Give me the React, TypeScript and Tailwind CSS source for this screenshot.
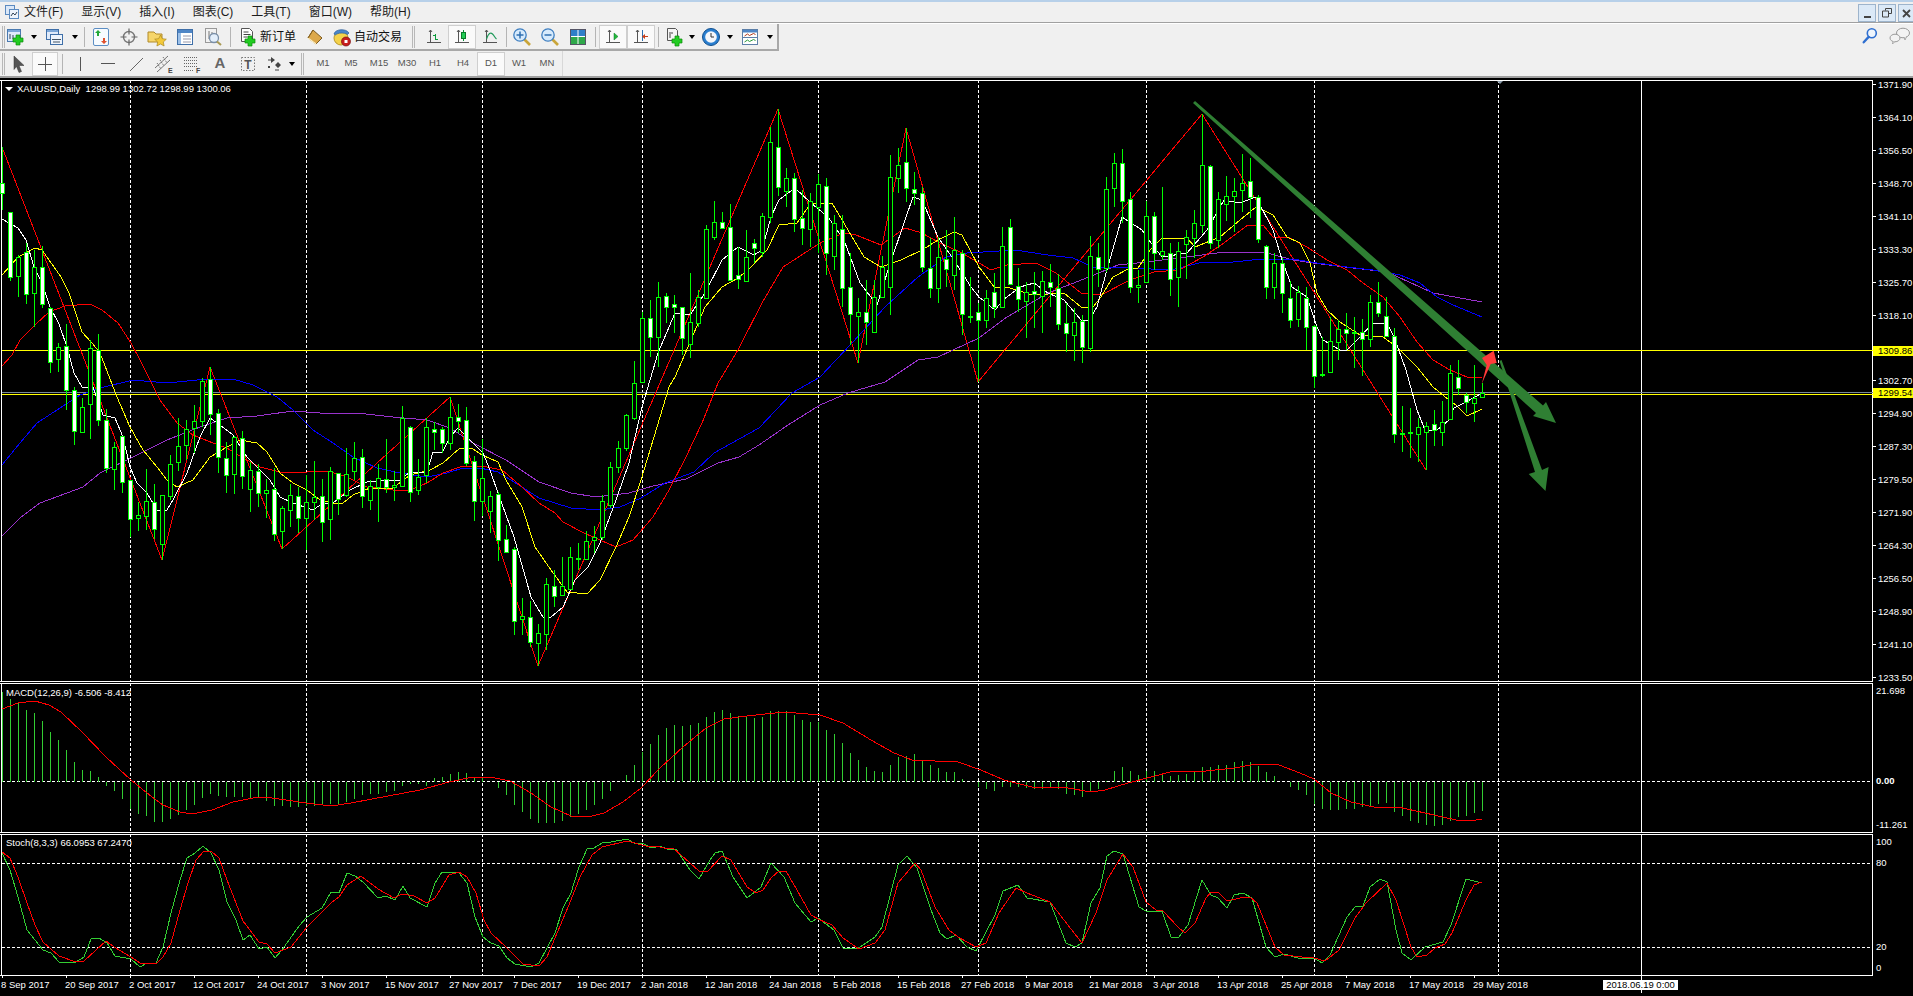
import React from 'react';

type Pt = number[];

const pts = (a: Pt[]) => a.map((p) => p.join(',')).join(' ');
// readings taken off zoomed crops: x is squeezed, y is always 3x
const zoomed = (ox: number, oy: number, sx: number, a: Pt[]) => a.map(([x, y]) => [Math.round(ox + x / sx), Math.round(oy + y / 3)]);

// hi, body top, body bottom, lo, filled
const candles: number[][] = [
  [147,183,193,210,1],[212,212,277,281,1],[255,257,276,297,0],[243,252,294,304,1],[250,267,293,327,0],[246,267,304,308,1],[307,308,362,373,1],[343,347,359,372,0],
  [324,346,390,410,1],[387,390,431,445,1],[398,407,432,432,0],[340,348,404,439,0],[334,350,420,426,1],[409,420,468,473,1],[442,447,469,490,0],[436,436,482,493,1],
  [480,480,519,537,1],[502,515,518,531,0],[469,501,516,530,0],[484,502,529,539,1],[495,495,544,560,0],[455,464,496,500,0],[418,446,462,471,0],[420,429,445,460,0],
  [405,421,428,453,0],[378,381,421,427,0],[367,379,414,435,1],[409,413,457,473,1],[442,458,475,493,1],[436,437,474,494,0],[431,438,476,489,1],[462,470,489,512,0],
  [464,471,493,507,1],[479,490,493,518,0],[468,489,534,541,1],[506,508,531,549,0],[484,495,510,527,0],[487,496,518,533,1],[475,502,518,550,0],[461,497,502,520,0],
  [479,496,522,542,1],[467,471,519,540,0],[473,473,499,515,1],[448,474,495,497,0],[442,458,471,480,0],[449,457,496,508,1],[480,486,500,510,0],[464,478,487,522,0],
  [439,479,487,493,1],[471,485,487,501,0],[406,418,486,486,0],[426,427,492,502,1],[459,477,490,495,0],[418,427,475,483,0],[422,429,432,450,1],[427,429,443,453,1],
  [397,417,443,450,0],[404,417,421,433,1],[407,420,463,466,1],[456,461,501,521,1],[439,478,501,516,0],[491,496,511,533,0],[492,494,540,561,1],[525,539,552,553,1],
  [547,549,621,635,1],[598,616,619,635,0],[601,617,642,647,1],[624,633,643,666,0],[578,584,634,650,0],[570,586,596,607,1],[557,586,595,595,0],[547,557,589,589,0],
  [543,558,559,570,0],[531,541,559,560,0],[526,537,540,553,0],[495,501,537,540,0],[462,467,505,508,0],[441,448,467,473,0],[414,415,448,451,0],[361,383,418,420,0],
  [312,318,382,382,0],[300,318,337,357,1],[282,297,337,367,0],[293,296,307,323,1],[295,304,307,333,1],[307,307,338,355,1],[273,322,344,358,0],[290,297,323,327,0],
  [225,229,298,298,0],[201,222,237,240,0],[212,222,228,229,1],[204,227,280,280,1],[247,275,279,289,1],[230,257,281,281,0],[239,243,248,263,1],[213,216,252,257,0],
  [127,142,217,223,0],[109,147,187,196,1],[168,178,191,207,0],[173,178,219,232,1],[190,218,228,245,1],[193,201,229,247,0],[174,184,207,253,0],[178,186,253,275,1],
  [215,223,256,270,0],[215,229,288,307,1],[253,287,314,345,1],[298,312,316,363,0],[280,312,322,345,1],[280,297,332,332,0],[256,267,297,297,0],[155,177,287,315,0],
  [148,165,178,193,0],[128,162,188,202,1],[172,189,193,205,1],[187,193,267,272,1],[238,268,288,298,1],[237,257,288,303,0],[230,259,269,287,1],[217,250,275,290,0],
  [250,253,314,335,1],[277,316,317,323,0],[303,312,320,382,1],[290,298,320,328,0],[273,292,307,318,1],[227,246,307,307,0],[219,227,284,285,1],[268,286,299,312,1],
  [282,292,301,338,0],[272,291,294,328,1],[271,281,296,333,0],[264,282,287,307,1],[274,288,324,330,1],[303,323,333,352,1],[308,322,335,361,0],[315,321,347,363,1],
  [236,256,348,352,0],[243,257,269,287,1],[177,189,268,272,0],[153,163,188,207,0],[149,163,201,223,1],[192,199,287,293,1],[270,285,287,303,0],[201,216,282,282,0],
  [212,216,253,270,1],[187,251,255,260,0],[243,253,279,296,1],[242,251,277,307,0],[230,237,244,279,0],[210,223,238,258,0],[114,165,225,233,0],[165,166,243,249,1],
  [192,199,240,248,0],[176,196,204,221,0],[178,191,196,232,0],[154,183,190,212,0],[158,181,197,218,1],[195,197,239,243,1],[245,246,287,299,1],[253,263,287,299,0],
  [258,263,293,313,1],[281,298,320,328,1],[286,292,319,327,0],[287,298,327,350,1],[325,326,376,388,1],[337,374,375,377,0],[317,341,372,372,0],[320,329,342,360,0],
  [313,329,333,350,1],[317,332,333,368,0],[319,332,339,376,1],[295,302,339,347,0],[282,302,313,317,1],[297,316,336,337,1],[328,336,434,443,1],[406,433,434,452,0],
  [408,432,433,458,0],[418,427,434,462,0],[422,426,432,470,0],[410,424,430,446,1],[401,422,432,446,0],[365,373,419,420,0],[360,377,388,395,1],[393,395,402,413,1],
  [365,398,403,422,0],[383,393,397,397,0],
];

const zigzag: Pt[] = [[2,147],[162,560],[210,367],[282,549],[450,397],[538,666],[778,109],[858,363],[906,128],[978,382],[1202,114],[1426,470]];

const whiteMa: Pt[] = [[2,219],[18,228],[26,240],[34,267],[42,283],[50,307],[59,324],[67,347],[74,373],[82,387],[93,387],[103,415],[115,418],[123,437],[130,467],[137,483],[147,493],[157,510],[167,510],[173,500],[187,473],[200,437],[210,418],[220,425],[233,435],[247,457],[260,470],[270,480],[280,497],[293,503],[313,510],[323,503],[333,503],[350,490],[367,482],[387,480],[400,480],[410,472],[427,472],[433,452],[442,453],[450,437],[458,428],[473,443],[483,453],[490,470],[498,493],[514,537],[531,597],[543,617],[551,617],[563,607],[575,580],[588,567],[600,543],[616,500],[629,463],[642,407],[658,353],[675,313],[690,315],[705,293],[722,260],[738,247],[754,255],[762,250],[771,217],[779,200],[795,188],[811,203],[828,217],[844,240],[860,283],[877,305],[889,267],[905,220],[913,197],[922,200],[938,237],[954,260],[971,287],[979,297],[995,310],[1003,300],[1020,287],[1034,283],[1048,293],[1064,300],[1081,320],[1089,320],[1097,307],[1105,277],[1122,217],[1142,230],[1154,247],[1162,257],[1187,253],[1207,230],[1224,200],[1240,203],[1256,197],[1273,230],[1283,263],[1292,287],[1307,297],[1317,327],[1323,340],[1340,350],[1347,350],[1360,337],[1373,323],[1387,323],[1394,337],[1406,370],[1417,410],[1425,430],[1437,430],[1449,420],[1454,408],[1466,402],[1482,393]];

const yellowMa: Pt[] = [[2,275],[18,257],[35,248],[42,250],[61,277],[69,293],[82,332],[92,343],[100,353],[117,397],[130,427],[143,450],[157,467],[167,480],[177,487],[193,480],[210,457],[227,447],[240,440],[257,443],[267,452],[280,473],[293,483],[307,490],[320,500],[333,503],[343,503],[353,495],[370,488],[393,488],[410,475],[430,470],[443,463],[460,448],[473,449],[482,455],[498,462],[506,480],[522,507],[535,547],[551,570],[567,592],[587,594],[600,580],[616,547],[629,517],[641,480],[657,427],[669,387],[675,377],[691,340],[705,307],[722,287],[738,278],[750,268],[767,250],[779,225],[797,223],[811,203],[832,203],[848,230],[864,257],[881,267],[901,260],[922,250],[938,240],[954,232],[962,235],[979,267],[995,288],[1007,287],[1032,295],[1064,293],[1081,307],[1093,307],[1101,297],[1113,277],[1130,268],[1138,268],[1150,250],[1162,238],[1187,238],[1195,247],[1220,237],[1240,220],[1256,207],[1263,210],[1273,215],[1287,237],[1300,243],[1310,263],[1317,293],[1327,310],[1340,322],[1360,335],[1383,337],[1397,347],[1417,367],[1433,387],[1449,400],[1456,405],[1467,416],[1482,409]];

const redMa: Pt[] = [[2,366],[12,355],[20,340],[35,325],[49,312],[65,306],[90,304],[102,310],[118,323],[131,343],[140,360],[160,400],[177,423],[193,435],[213,443],[227,448],[243,458],[260,467],[280,472],[307,472],[327,471],[347,477],[367,487],[393,490],[410,490],[427,483],[443,473],[460,467],[482,466],[502,470],[522,487],[539,503],[555,513],[563,522],[584,533],[600,540],[616,547],[633,540],[653,517],[669,490],[686,457],[702,423],[718,383],[738,350],[762,303],[783,267],[797,258],[820,243],[844,233],[856,235],[881,245],[905,228],[922,233],[938,242],[962,253],[991,270],[1007,265],[1036,263],[1056,273],[1081,293],[1101,295],[1130,280],[1154,272],[1179,270],[1203,257],[1224,243],[1248,225],[1263,225],[1273,237],[1290,238],[1307,247],[1327,260],[1347,270],[1363,283],[1383,297],[1400,317],[1417,342],[1433,360],[1450,370],[1467,377],[1482,378]];

const blueMa: Pt[] = [[2,465],[20,443],[37,423],[57,410],[80,395],[100,388],[133,380],[167,383],[207,379],[233,379],[253,385],[277,397],[293,410],[313,430],[333,443],[353,457],[377,468],[400,473],[427,477],[447,473],[463,468],[480,468],[498,472],[514,482],[539,498],[571,508],[600,510],[620,507],[641,498],[665,483],[694,472],[714,453],[759,428],[792,393],[820,377],[852,343],[885,307],[918,277],[946,257],[967,253],[1015,250],[1048,255],[1073,258],[1093,267],[1130,268],[1171,270],[1203,262],[1224,263],[1252,260],[1293,259],[1317,263],[1347,267],[1373,270],[1400,275],[1420,283],[1437,297],[1453,305],[1482,317]];

const purpleMa: Pt[] = [[2,536],[20,518],[40,503],[67,493],[83,487],[100,473],[133,457],[167,440],[200,427],[227,418],[257,416],[293,411],[320,413],[357,413],[393,417],[427,420],[450,428],[473,443],[506,460],[539,482],[571,493],[596,497],[629,493],[653,486],[686,479],[718,463],[739,457],[759,445],[788,425],[820,405],[848,393],[885,382],[918,360],[938,357],[979,338],[1007,317],[1048,293],[1089,277],[1118,265],[1146,262],[1187,257],[1224,252],[1252,252],[1267,253],[1293,260],[1313,263],[1353,268],[1387,272],[1420,287],[1433,293],[1482,302]];

const macdHist = [90,83,80,72,69,61,50,42,32,20,12,11,5,-4,-9,-17,-27,-32,-34,-40,-40,-37,-33,-28,-23,-16,-12,-14,-15,-15,-15,-16,-16,-19,-24,-24,-25,-25,-24,-24,-23,-22,-22,-20,-17,-13,-12,-12,-10,-9,-4,-2,-2,-4,4,5,8,10,9,5,4,0,-6,-13,-23,-30,-37,-41,-41,-41,-39,-35,-32,-28,-23,-17,-9,0,7,17,30,38,47,54,57,56,57,59,65,70,72,69,66,65,64,65,71,71,71,67,62,60,60,52,48,39,29,22,15,11,10,17,25,26,28,22,17,14,10,10,3,0,-5,-7,-9,-5,-5,-5,-6,-7,-7,-6,-7,-12,-13,-15,-10,-7,1,11,15,11,7,11,11,9,6,7,8,10,15,15,17,17,20,21,20,16,10,6,0,-5,-8,-13,-22,-27,-28,-28,-27,-27,-25,-24,-22,-21,-30,-34,-39,-41,-43,-44,-43,-39,-35,-34,-31,-29];

const macdSignal: Pt[] = [[2,709],[18,703],[35,701],[49,705],[61,712],[82,732],[106,757],[131,780],[147,793],[163,805],[180,812],[192,814],[212,810],[233,802],[253,798],[265,797],[286,800],[306,803],[331,806],[351,803],[388,796],[420,790],[449,782],[473,777],[490,777],[510,781],[531,793],[551,807],[571,816],[588,817],[604,813],[623,802],[641,788],[660,768],[683,747],[706,728],[724,719],[747,716],[784,712],[820,715],[843,723],[871,740],[894,753],[912,760],[958,762],[981,770],[1004,780],[1032,787],[1068,788],[1091,792],[1105,790],[1128,783],[1151,777],[1174,771],[1206,771],[1234,768],[1257,764],[1279,765],[1300,773],[1314,779],[1331,793],[1351,802],[1374,807],[1398,807],[1425,813],[1456,820],[1476,820],[1482,819]];

const stochMain: Pt[] = [
  ...zoomed(0, 670, 2.45, [[5,550],[25,600],[45,680],[65,780],[85,810],[105,840],[125,850],[145,875],[185,877],[205,860],[222,808],[242,803],[262,820],[282,858],[320,868],[342,890],[360,880],[382,880],[400,830],[420,730],[440,630],[458,565],[478,550],[497,527],[517,550],[537,600],[557,695],[577,750],[595,810],[613,795],[635,837],[653,832],[673,865],[692,840],[732,768],[752,740],[790,715],[810,665],[830,670],[850,610],[870,618],[890,635],[925,685],[945,678],[967,690],[987,647],[1005,685],[1046,710],[1066,640],[1084,605],[1124,608],[1143,640],[1163,740],[1183,802],[1203,820],[1222,827],[1242,865],[1262,882],[1300,890],[1320,880],[1360,790],[1380,715],[1398,670],[1418,590],[1438,538],[1456,533],[1476,520],[1496,515],[1535,508]]),
  ...zoomed(600, 680, 2.178, [[75,490],[92,488],[110,505],[130,497],[150,510],[165,507],[195,570],[215,597],[240,540],[250,520],[265,514],[290,590],[320,655],[350,620],[372,550],[400,590],[425,670],[460,727],[475,713],[510,750],[530,805],[560,807],[600,770],[615,740],[650,555],[668,528],[690,565],[720,690],[740,760],[755,778],[775,765],[800,800],[820,812],[860,705],[878,632],[910,615],[930,655],[980,665],[1015,790],[1035,802],[1050,790],[1070,670],[1090,625],[1105,527],[1120,512],[1140,523],[1175,680],[1190,693],[1225,693],[1243,772],[1260,770],[1280,735],[1312,600],[1330,645],[1345,653],[1365,683],[1380,645],[1400,640],[1420,655],[1450,802],[1470,830],[1490,822],[1520,835]]),
  ...zoomed(1300, 670, 2.558, [[35,865],[55,880],[78,855],[120,740],[140,710],[160,707],[180,650],[205,628],[222,637],[245,780],[262,850],[283,870],[320,832],[365,815],[385,765],[425,628],[465,638]]),
];

const stochSignal: Pt[] = [
  ...zoomed(0, 670, 2.45, [[5,545],[25,565],[45,620],[65,700],[85,765],[105,815],[145,858],[185,877],[205,872],[260,812],[280,830],[320,862],[342,878],[382,882],[400,860],[420,820],[440,720],[460,640],[480,570],[500,543],[517,542],[537,565],[557,630],[577,700],[595,752],[635,815],[653,823],[673,848],[713,830],[753,770],[790,727],[810,700],[830,680],[850,645],[885,618],[925,657],[965,685],[985,673],[1015,678],[1046,700],[1066,685],[1100,615],[1124,607],[1145,620],[1165,670],[1185,750],[1203,790],[1242,835],[1282,882],[1320,887],[1340,860],[1400,690],[1420,620],[1450,555],[1476,530],[1535,512]]),
  ...zoomed(600, 680, 2.178, [[100,497],[125,497],[145,508],[160,505],[195,550],[215,573],[235,573],[265,527],[285,540],[320,620],[340,640],[355,630],[372,595],[390,572],[405,572],[430,630],[460,705],[480,720],[505,735],[530,775],[565,806],[600,790],[620,750],[650,610],[685,548],[700,570],[730,680],[760,750],[780,770],[820,802],[840,790],[870,700],[905,625],[930,640],[980,665],[1010,720],[1050,790],[1080,700],[1105,600],[1140,522],[1160,560],[1190,665],[1210,690],[1225,690],[1260,745],[1275,760],[1295,730],[1320,655],[1330,637],[1345,637],[1365,662],[1395,655],[1415,650],[1430,670],[1470,800],[1490,825],[1530,830]]),
  ...zoomed(1300, 670, 2.558, [[35,864],[65,872],[100,840],[140,745],[170,700],[222,638],[245,690],[283,830],[300,860],[325,855],[345,835],[370,822],[390,790],[425,690],[445,645],[465,637]]),
];

const gridX = [130, 306, 482, 642, 818, 978, 1146, 1314, 1498];
const prices = ['1371.90','1364.10','1356.50','1348.70','1341.10','1333.30','1325.70','1318.10','1310.30','1302.70','1294.90','1287.30','1279.50','1271.90','1264.30','1256.50','1248.90','1241.10','1233.50'];
const dates = ['8 Sep 2017','20 Sep 2017','2 Oct 2017','12 Oct 2017','24 Oct 2017','3 Nov 2017','15 Nov 2017','27 Nov 2017','7 Dec 2017','19 Dec 2017','2 Jan 2018','12 Jan 2018','24 Jan 2018','5 Feb 2018','15 Feb 2018','27 Feb 2018','9 Mar 2018','21 Mar 2018','3 Apr 2018','13 Apr 2018','25 Apr 2018','7 May 2018','17 May 2018','29 May 2018'];
const menus = ['文件(F)','显示(V)','插入(I)','图表(C)','工具(T)','窗口(W)','帮助(H)'];
const periods = ['M1','M5','M15','M30','H1','H4','D1','W1','MN'];

function Ic({ children, size = 20 }: { children: React.ReactNode; size?: number }) {
  return <svg width={size} height={size} viewBox="0 0 20 20" className="block">{children}</svg>;
}

const Plus = ({ x = 10, y = 10 }: { x?: number; y?: number }) => (
  <path d={`M${x + 3} ${y}h4v3h3v4h-3v3h-4v-3h-3v-4h3z`} fill="#22cc22" stroke="#0a8a0a" strokeWidth="0.7" />
);

function Axes() {
  return (
    <g stroke="#555" strokeWidth="1" fill="none" shapeRendering="crispEdges">
      <path d="M6.500 3v13M3 15.500h14" />
      <path d="M5 5l1.500-2 1.500 2" shapeRendering="auto" />
    </g>
  );
}

const NewChart = () => (
  <Ic>
    <rect x="1.500" y="2.500" width="13" height="12" fill="#dfeafa" stroke="#4a7ab0" />
    <rect x="2" y="3" width="12" height="2" fill="#7ba6d8" />
    <path d="M4 7v5M7 8v4" stroke="#345" />
    <Plus x={7} y={8} />
  </Ic>
);
const Profiles = () => (
  <Ic>
    <rect x="1.500" y="2.500" width="12" height="10" fill="#dfeafa" stroke="#3f6fa8" />
    <rect x="5.500" y="7.500" width="12" height="10" fill="#eef4fc" stroke="#3f6fa8" />
    <rect x="2" y="3" width="11" height="2" fill="#7ba6d8" />
    <path d="M7 12.500h9M8 15h7" stroke="#456" />
  </Ic>
);
const MarketWatch = () => (
  <Ic>
    <rect x="2.500" y="1.500" width="15" height="17" rx="1.500" fill="#f7fbff" stroke="#5c8ec4" />
    <path d="M7 3l3 3h-2v3h-2v-3h-2z" fill="#22a83a" />
    <path d="M13 17l-3-3h2v-3h2v3h2z" fill="#e0522e" />
  </Ic>
);
const Crosshair = () => (
  <Ic>
    <circle cx="10" cy="10" r="5.500" fill="none" stroke="#777" strokeWidth="1.400" />
    <path d="M10 1.500v6M10 12.500v6M1.500 10h6M12.500 10h6" stroke="#666" strokeWidth="1.200" />
  </Ic>
);
const Navigator = () => (
  <Ic>
    <path d="M1 5h6l2 2h6v8H1z" fill="#f6d56a" stroke="#b08a2a" />
    <path d="M13.500 8l1.800 3.700 4 .5-3 2.800.8 4-3.600-2-3.600 2 .8-4-3-2.800 4-.5z" fill="#f3c93a" stroke="#a98620" strokeWidth="0.7" />
  </Ic>
);
const Terminal = () => (
  <Ic>
    <rect x="2.500" y="2.500" width="15" height="15" fill="#fff" stroke="#3f6fa8" />
    <rect x="3" y="3" width="14" height="3" fill="#4f86c6" />
    <rect x="3" y="6" width="3" height="11" fill="#9cc0e8" />
    <path d="M8 9h8M8 12h8M8 15h8" stroke="#99a" />
  </Ic>
);
const Tester = () => (
  <Ic>
    <rect x="2.500" y="1.500" width="11" height="14" fill="#f2f2f2" stroke="#999" />
    <path d="M6 4v8M9 5v6" stroke="#777" />
    <circle cx="11" cy="11" r="4.500" fill="#e4effb" stroke="#7a8fa8" strokeWidth="1.300" />
    <path d="M14 14.500l4 3.500" stroke="#a99a55" strokeWidth="2" />
  </Ic>
);
const NewOrder = () => (
  <Ic>
    <path d="M3.500 1.500h8l3 3v10h-11z" fill="#fff" stroke="#555" />
    <path d="M5.500 5h5M5.500 7.500h7M5.500 10h4" stroke="#444" />
    <Plus x={7} y={9} />
  </Ic>
);
const Book = () => (
  <Ic>
    <path d="M8 3l9 8-6 6-8-6z" fill="#dca84a" stroke="#7b5a20" />
    <path d="M3 11l8 6" stroke="#fff2c8" strokeWidth="1.200" />
    <path d="M8 3l-5 8" stroke="#8a6420" />
  </Ic>
);
const AutoTrade = () => (
  <Ic>
    <circle cx="9" cy="11" r="7" fill="#f4d24a" stroke="#b8962a" />
    <path d="M2 7c1-5 12-6 15-1l-1.500 1.500C12 5.500 6 5.500 3.500 8z" fill="#4a86c8" stroke="#2e5e98" strokeWidth="0.7" />
    <circle cx="14" cy="14.500" r="4.500" fill="#c81e1e" stroke="#7a0f0f" strokeWidth="0.7" />
    <rect x="12.500" y="13" width="3" height="3" fill="#fff" />
  </Ic>
);
const ChartBars = () => (
  <Ic>
    <Axes />
    <path d="M11.500 7v6M12 12h2M9 8h2.500" stroke="#0a9a3a" fill="none" shapeRendering="crispEdges" />
  </Ic>
);
const ChartCandles = () => (
  <Ic>
    <Axes />
    <path d="M11.500 3v11" stroke="#0a8a3a" shapeRendering="crispEdges" />
    <rect x="9.500" y="5.500" width="4" height="6" fill="#22cc55" stroke="#0a7a2a" shapeRendering="crispEdges" />
  </Ic>
);
const ChartLine = () => (
  <Ic>
    <Axes />
    <path d="M6.500 12c2-6 4-7 6-5s2.500 4 4 5" stroke="#1f9a5a" strokeWidth="1.200" fill="none" />
  </Ic>
);
const Zoom = ({ plus }: { plus?: boolean }) => (
  <Ic>
    <path d="M12 12l6 6" stroke="#c9a53a" strokeWidth="2.600" />
    <circle cx="8" cy="8" r="6.200" fill="#d6eafc" stroke="#3f7fc0" strokeWidth="1.300" />
    <path d={plus ? 'M4.500 8h7M8 4.500v7' : 'M4.500 8h7'} stroke="#2f6fb0" strokeWidth="1.500" />
  </Ic>
);
const Tile = () => (
  <Ic>
    <rect x="2.500" y="2.500" width="15" height="15" fill="#fff" stroke="#556" />
    <rect x="3" y="3" width="7" height="6" fill="#2f7fc8" />
    <rect x="10" y="3" width="7" height="6" fill="#2f7fc8" />
    <rect x="3" y="10" width="7" height="7" fill="#2fa84a" />
    <rect x="10" y="10" width="7" height="7" fill="#2fa84a" />
    <path d="M10 3v14M3 9.500h14" stroke="#fff" />
  </Ic>
);
const Scroll = () => (
  <Ic>
    <Axes />
    <path d="M11 6l4 3.500-4 3.500z" fill="#22b83a" stroke="#0a7a2a" strokeWidth="0.500" />
  </Ic>
);
const AutoShift = () => (
  <Ic>
    <Axes />
    <path d="M11.500 3v11" stroke="#2a6fb0" strokeWidth="1.300" shapeRendering="crispEdges" />
    <path d="M17 9h-3l0-2-3 2.500 3 2.500 0-2h3z" fill="#c8401a" />
  </Ic>
);
const Indicators = () => (
  <Ic>
    <path d="M2.500 1.500h8l2 2v10h-10z" fill="#f4f4f4" stroke="#555" />
    <path d="M5 5v6M8 6h-2" stroke="#444" />
    <Plus x={7} y={9} />
  </Ic>
);
const Clock = () => (
  <Ic>
    <circle cx="10" cy="10" r="8.500" fill="#2a7fd0" stroke="#12508e" />
    <circle cx="10" cy="10" r="5.800" fill="#f5f7fa" />
    <path d="M10 6v4h3" stroke="#333" strokeWidth="1" fill="none" />
  </Ic>
);
const Templates = () => (
  <Ic>
    <rect x="2.500" y="2.500" width="15" height="15" fill="#fff" stroke="#5c7fa8" />
    <rect x="3" y="3" width="14" height="2.500" fill="#4f86c6" />
    <path d="M3 10.500h14" stroke="#5c7fa8" />
    <path d="M4.500 9l3-2 2 1.500 4-2 2 1" stroke="#b03a1a" fill="none" />
    <path d="M4.500 15l3-2 2 1.500 4-2 2 1" stroke="#2a9a3a" fill="none" />
  </Ic>
);
const Search = () => (
  <Ic size={18}>
    <circle cx="12" cy="7" r="5" fill="#eef5fd" stroke="#2f6fd0" strokeWidth="1.800" />
    <path d="M8.500 11l-5.500 6" stroke="#2f6fd0" strokeWidth="2.600" strokeLinecap="round" />
  </Ic>
);
const Chat = () => (
  <svg width="22" height="18" viewBox="0 0 22 18" className="block">
    <ellipse cx="14" cy="6" rx="6.500" ry="4.800" fill="#f3f3f3" stroke="#999" />
    <path d="M15 10l1 3 1.500-3.500" fill="#f3f3f3" stroke="#999" strokeWidth="0.800" />
    <ellipse cx="6" cy="11" rx="5" ry="3.800" fill="#f3f3f3" stroke="#999" />
    <path d="M4 14.500l-.500 2.500 2.500-2.500" fill="#f3f3f3" stroke="#999" strokeWidth="0.800" />
  </svg>
);
const Cursor = () => (
  <Ic>
    <path d="M5 2l10 9.500h-5l2.500 6-2.500 1-2.500-6L5 15.500z" fill="#555" stroke="#333" strokeWidth="0.500" />
  </Ic>
);
const Channel = () => (
  <Ic>
    <g stroke="#666" strokeWidth="0.900">
      <path d="M1 14L14 2M3 18L16 6" />
      <path d="M3 9l4 6M6 6l4 6M9 3l4 6" strokeDasharray="1.500 1" />
    </g>
    <text x="14" y="19" fontSize="7" fontWeight="700" fill="#444">E</text>
  </Ic>
);
const Fibo = () => (
  <Ic>
    <path d="M2 3.500h13M2 6.500h13M2 9.500h13M2 12.500h13M2 16.500h10" stroke="#666" strokeDasharray="1 1" />
    <text x="14" y="19" fontSize="7" fontWeight="700" fill="#444">F</text>
  </Ic>
);
const TextLabel = () => (
  <Ic>
    <rect x="3.500" y="3.500" width="13" height="13" fill="none" stroke="#777" strokeDasharray="1.500 1.500" />
    <text x="10" y="15" fontSize="12" fontWeight="700" textAnchor="middle" fill="#555">T</text>
  </Ic>
);
const Arrows = () => (
  <Ic>
    <path d="M6 3l4 3-4 3zM13 8l3 3-3 3-3-3zM3 12h2v2H3z" fill="#444" />
    <path d="M6 6h-3M10 16h4" stroke="#444" />
  </Ic>
);

const Drop = ({ w }: { w: string }) => (
  <span className={`flex items-center justify-center h-full ${w}`}>
    <span className="w-0 h-0 border-x-[3.500px] border-x-transparent border-t-[4px] border-t-black" />
  </span>
);
const Sep = ({ w }: { w: string }) => (
  <span className={`flex items-center justify-center h-full ${w}`}>
    <span className="block w-px h-[20px] bg-[#b4b4b4]" />
  </span>
);
const Grip = ({ w }: { w: string }) => (
  <span className={`flex items-center justify-center h-full ${w}`}>
    <span className="block w-[3px] h-[22px] border-x border-[#b8b8b8]" />
  </span>
);
const Btn = ({ w, pressed, children }: { w: string; pressed?: boolean; children: React.ReactNode }) => (
  <span className={`flex items-center justify-center h-[24px] ${w} ${pressed ? 'bg-[#fafafa] border border-[#cfcfcf]' : ''}`}>{children}</span>
);

function TopBars() {
  return (
    <>
      <div className="h-[2px] bg-[#b7d0e9]" />
      <div className="flex items-center justify-between h-[20px] bg-[#f0f0f0]">
        <div className="flex items-center">
          <span className="flex w-[24px] justify-center"><svg width="16" height="16" viewBox="0 0 16 16"><rect x="1.500" y="1.500" width="9" height="9" fill="#dbe8f8" stroke="#5b8ac0" /><rect x="5.500" y="5.500" width="9" height="9" fill="#eef4fc" stroke="#5b8ac0" /><path d="M7 12l2-3 2 2 2-3" stroke="#345" fill="none" /></svg></span>
          {menus.map((m) => (
            <span key={m} className="pr-[18px] text-[12px] leading-[20px] text-[#1c1c1c]">{m}</span>
          ))}
        </div>
        <div className="flex gap-[2px] pr-0 pt-[2px] h-[20px]">
          <span className="flex justify-center items-end pb-[3px] w-[18px] h-[18px] bg-[#dbe9f7] border border-[#9db4cc]"><span className="block w-[7px] h-[2px] bg-[#444]" /></span>
          <span className="flex justify-center items-center w-[18px] h-[18px] bg-[#dbe9f7] border border-[#9db4cc]"><svg width="10" height="10" viewBox="0 0 10 10"><path d="M3.500 2.500V.500h6v5H7M.500 3h6v6h-6z" fill="none" stroke="#444" /></svg></span>
          <span className="flex justify-center items-center w-[15px] h-[18px] bg-[#dbe9f7] border border-[#9db4cc] border-r-0"><svg width="9" height="9" viewBox="0 0 9 9"><path d="M1 1l7 7M8 1L1 8" stroke="#444" strokeWidth="1.800" /></svg></span>
        </div>
      </div>
      <div className="h-px bg-[#a0a0a0]" />
      <div className="h-px bg-white" />
      <div className="flex items-start justify-between h-[27px] bg-[#f0f0f0]">
        <div className="flex items-center w-[779px] h-[27px] border-r-2 border-b-2 border-[#a8a8a8]">
          <Grip w="w-[6px]" />
          <Btn w="w-[20px]"><NewChart /></Btn>
          <Drop w="w-[16px]" />
          <Btn w="w-[26px]"><Profiles /></Btn>
          <Drop w="w-[13px]" />
          <Sep w="w-[6px]" />
          <Btn w="w-[28px]"><MarketWatch /></Btn>
          <Btn w="w-[28px]"><Crosshair /></Btn>
          <Btn w="w-[28px]"><Navigator /></Btn>
          <Btn w="w-[28px]"><Terminal /></Btn>
          <Btn w="w-[28px]"><Tester /></Btn>
          <Sep w="w-[6px]" />
          <span className="flex items-center w-[67px] pl-[5px] gap-[2px] text-[12px] text-[#111]"><NewOrder />新订单</span>
          <Btn w="w-[30px]"><Book /></Btn>
          <span className="flex items-center w-[76px] pl-[2px] gap-[2px] text-[12px] text-[#111]"><AutoTrade />自动交易</span>
          <Grip w="w-[14px]" />
          <Btn w="w-[28px]"><ChartBars /></Btn>
          <Btn w="w-[28px]" pressed><ChartCandles /></Btn>
          <Btn w="w-[28px]"><ChartLine /></Btn>
          <Sep w="w-[4px]" />
          <Btn w="w-[28px]"><Zoom plus /></Btn>
          <Btn w="w-[28px]"><Zoom /></Btn>
          <Btn w="w-[28px]"><Tile /></Btn>
          <Sep w="w-[7px]" />
          <Btn w="w-[28px]" pressed><Scroll /></Btn>
          <Btn w="w-[28px]" pressed><AutoShift /></Btn>
          <Sep w="w-[7px]" />
          <Btn w="w-[26px]"><Indicators /></Btn>
          <Drop w="w-[8px]" />
          <Btn w="w-[30px]"><Clock /></Btn>
          <Drop w="w-[8px]" />
          <Btn w="w-[32px]"><Templates /></Btn>
          <Drop w="w-[8px]" />
        </div>
        <div className="flex items-center gap-[10px] pt-[3px] pr-[2px]">
          <Search />
          <Chat />
        </div>
      </div>
      <div className="flex items-center h-[25px] bg-[#f0f0f0]">
        <div className="flex items-center w-[563px] h-[25px] border-r border-[#d8d8d8]">
          <Grip w="w-[6px]" />
          <Btn w="w-[26px]"><Cursor /></Btn>
          <Btn w="w-[26px]" pressed><svg width="16" height="16" viewBox="0 0 16 16"><path d="M8 1v14M1 8h14" stroke="#555" shapeRendering="crispEdges" /></svg></Btn>
          <Sep w="w-[8px]" />
          <Btn w="w-[28px]"><span className="block w-px h-[14px] bg-[#555]" /></Btn>
          <Btn w="w-[28px]"><span className="block w-[14px] h-px bg-[#555]" /></Btn>
          <Btn w="w-[28px]"><svg width="16" height="16" viewBox="0 0 16 16"><path d="M2 15L15 2" stroke="#666" /></svg></Btn>
          <Btn w="w-[28px]"><Channel /></Btn>
          <Btn w="w-[28px]"><Fibo /></Btn>
          <Btn w="w-[28px]"><span className="text-[15px] font-bold text-[#666]">A</span></Btn>
          <Btn w="w-[28px]"><TextLabel /></Btn>
          <Btn w="w-[26px]"><Arrows /></Btn>
          <Drop w="w-[8px]" />
          <Grip w="w-[13px]" />
          {periods.map((p) => (
            <Btn key={p} w="w-[28px]" pressed={p === 'D1'}>
              <span className="text-[9.500px] text-[#555]">{p}</span>
            </Btn>
          ))}
        </div>
      </div>
      <div className="h-[2px] bg-[#a0a0a0]" />
      <div className="h-[2px] bg-black" />
    </>
  );
}

// vertical grid + panel frame, shared by the three chart panes
function Frame({ top, bottom }: { top: number; bottom: number }) {
  return (
    <g shapeRendering="crispEdges" fill="none">
      {gridX.map((x) => (
        <line key={x} x1={x + 0.5} x2={x + 0.5} y1={top} y2={bottom} stroke="#fff" strokeDasharray="3 2" />
      ))}
      <line x1="1641.500" x2="1641.500" y1={top} y2={bottom} stroke="#fff" />
      <path d={`M0 ${top + 0.5}H1873M0 ${bottom - 0.5}H1873M1.500 ${top}V${bottom}M1872.500 ${top}V${bottom}`} stroke="#fff" />
    </g>
  );
}

function MainPane() {
  return (
    <div className="flex h-[602px]">
      <svg width="1873" height="602" viewBox="0 80 1873 602" className="block shrink-0">
        <Frame top={80} bottom={682} />
        <g shapeRendering="crispEdges" fill="none">
          <line x1="2" x2="1873" y1="392.500" y2="392.500" stroke="#778899" />
          <line x1="2" x2="1873" y1="350.500" y2="350.500" stroke="#ffff00" />
          <line x1="2" x2="1873" y1="394.500" y2="394.500" stroke="#ffff00" />
          <polyline points={pts(zigzag)} stroke="#ff0000" />
          <polyline points={pts(purpleMa)} stroke="#9932cc" />
          <polyline points={pts(blueMa)} stroke="#0000ff" />
          <polyline points={pts(redMa)} stroke="#ff0000" />
          <polyline points={pts(yellowMa)} stroke="#ffff00" />
          <polyline points={pts(whiteMa)} stroke="#ffffff" />
          {candles.map(([hi, t, b, lo, filled], i) => {
            const x = 2.5 + 8 * i;
            return (
              <g key={i}>
                <line x1={x} x2={x} y1={hi} y2={lo} stroke="#00ff00" />
                <rect x={x - 2} y={t + 0.5} width="4" height={Math.max(b - t, 1)} fill={filled ? '#ffffff' : '#000000'} stroke="#00ff00" />
              </g>
            );
          })}
        </g>
        <path d="M1497 81h6l-3 3z" fill="#8a9aa8" />
        <g fill="#2f7f33">
          <path d="M1195 101L1543 405.500L1546 402L1556 423L1533 416L1536 413L1193 103z" />
          <path d="M1501.500 360L1542 470L1548.600 467L1545.500 491L1528.700 474L1535 472L1499.500 361z" />
        </g>
        <path d="M1493.700 350.700L1482 358L1486.700 365L1481.700 384L1490.700 364L1496.700 363z" fill="#ff3b3b" />
      </svg>
      <aside className="relative w-[40px] h-[602px] overflow-hidden text-white text-[9.500px]">
        {prices.map((p) => (
          <div key={p} className="flex items-start h-[32.950px] leading-[10px]">
            <span className="block w-[3px] h-px mt-[4px] bg-white" />
            <span className="ml-[2px]">{p}</span>
          </div>
        ))}
        <div className="absolute left-0 top-[266px] w-full h-[10px] pl-[5px] bg-[#ffff00] text-black leading-[10px]">1309.86</div>
        <div className="absolute left-0 top-[308px] w-full h-[10px] pl-[5px] bg-[#ffff00] text-black leading-[10px]">1299.54</div>
      </aside>
      <div className="absolute left-[5px] top-[87px] w-0 h-0 border-x-[4px] border-x-transparent border-t-[4px] border-t-white" />
      <div className="absolute left-[17px] top-[84px] text-white text-[9.500px] leading-[10px] whitespace-pre">XAUUSD,Daily  1298.99 1302.72 1298.99 1300.06</div>
    </div>
  );
}

function MacdPane() {
  const zero = 781.5;
  return (
    <div className="flex h-[152px]">
      <svg width="1873" height="152" viewBox="0 682 1873 152" className="block shrink-0">
        <g shapeRendering="crispEdges" fill="none">
          <Frame top={683} bottom={833} />
          <line x1="2" x2="1873" y1={zero} y2={zero} stroke="#fff" strokeDasharray="3 2" />
          {macdHist.map((v, i) => (
            <line key={i} x1={2.5 + 8 * i} x2={2.5 + 8 * i} y1={zero} y2={zero - v} stroke="#32cd32" />
          ))}
          <polyline points={pts(macdSignal)} stroke="#ff0000" />
        </g>
      </svg>
      <aside className="w-[40px] text-white text-[9.500px] leading-[10px] pl-[3px] pt-[4px]">
        <div>21.698</div>
        <div className="mt-[80px] font-bold">0.00</div>
        <div className="mt-[34px]">-11.261</div>
      </aside>
      <div className="absolute left-[6px] top-[688px] text-white text-[9.500px] leading-[10px]">MACD(12,26,9) -6.506 -8.412</div>
    </div>
  );
}

function StochPane() {
  return (
    <div className="flex h-[142px]">
      <svg width="1873" height="142" viewBox="0 834 1873 142" className="block shrink-0">
        <g shapeRendering="crispEdges" fill="none">
          <Frame top={834} bottom={976} />
          <line x1="2" x2="1873" y1="863.500" y2="863.500" stroke="#fff" strokeDasharray="3 2" />
          <line x1="2" x2="1873" y1="947.500" y2="947.500" stroke="#fff" strokeDasharray="3 2" />
          <polyline points={pts(stochMain)} stroke="#32cd32" />
          <polyline points={pts(stochSignal)} stroke="#ff0000" />
        </g>
      </svg>
      <aside className="w-[40px] text-white text-[9.500px] leading-[10px] pl-[3px] pt-[3px]">
        <div>100</div>
        <div className="mt-[11px]">80</div>
        <div className="mt-[74px]">20</div>
        <div className="mt-[11px]">0</div>
      </aside>
      <div className="absolute left-[6px] top-[838px] text-white text-[9.500px] leading-[10px]">Stoch(8,3,3) 66.0953 67.2470</div>
    </div>
  );
}

function DateAxis() {
  return (
    <div className="relative flex h-[20px] pl-px text-white text-[9.500px] leading-[10px]">
      {dates.map((d) => (
        <div key={d} className="w-[64px] shrink-0 whitespace-nowrap">
          <span className="block w-px h-[2px] ml-px bg-white" />
          <span className="block mt-[2px]">{d}</span>
        </div>
      ))}
      <div className="absolute left-[1641px] top-0 w-px h-[17px] bg-white" />
      <div className="absolute left-[1603px] top-[4px] w-[75px] h-[10px] bg-white text-black text-center">2018.06.19 0:00</div>
    </div>
  );
}

export default function App() {
  return (
    <div className="relative w-[1913px] h-[996px] overflow-hidden bg-black font-['Liberation_Sans','Noto_Sans_CJK_SC',sans-serif]">
      <TopBars />
      <MainPane />
      <MacdPane />
      <StochPane />
      <DateAxis />
    </div>
  );
}
